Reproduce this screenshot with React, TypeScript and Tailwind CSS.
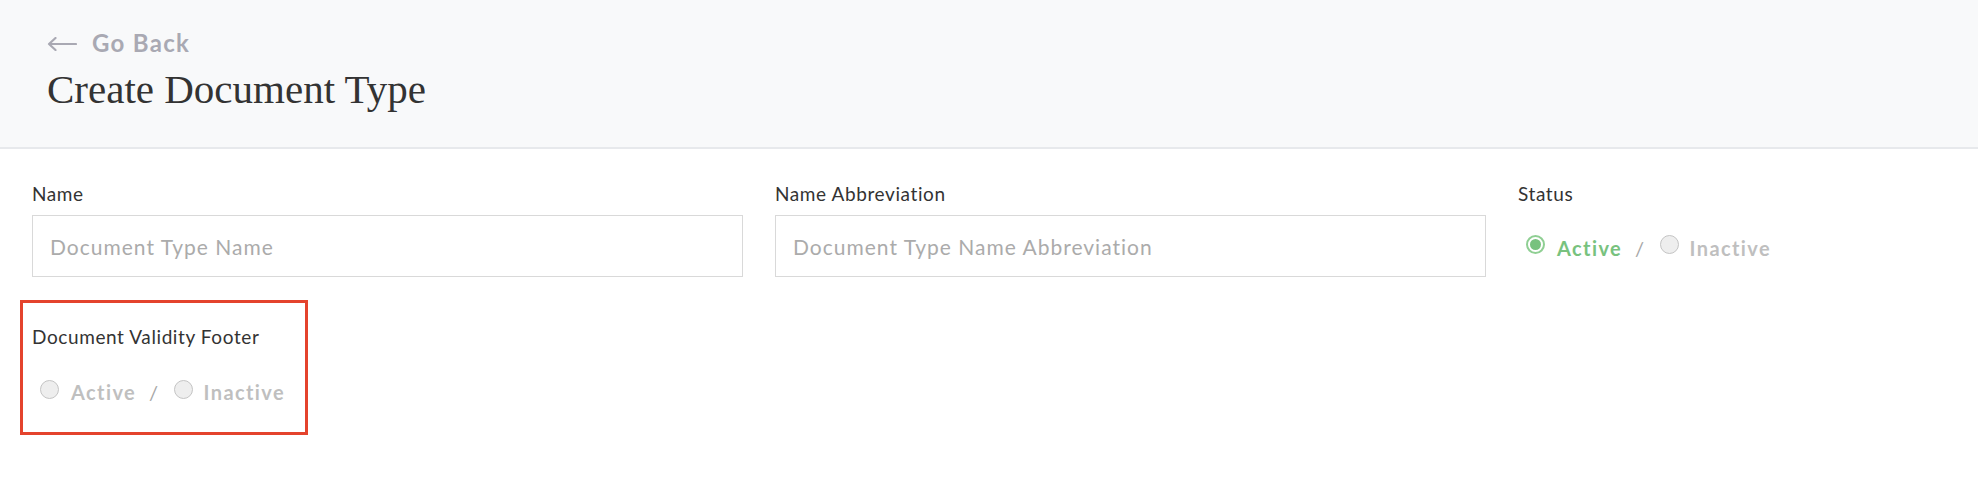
import React from 'react';

const SANS = { fontFamily: 'Lato, "Open Sans", sans-serif' };

function Radio({ checked }: { checked?: boolean }) {
  if (checked) {
    return (
      <span className="flex h-[19px] w-[19px] items-center justify-center rounded-full border-2 border-[#8fcf93] bg-white">
        <span className="h-[11px] w-[11px] rounded-full bg-[#78c27e]" />
      </span>
    );
  }
  return <span className="h-[19px] w-[19px] rounded-full border border-[#c4c4c4] bg-[#eeeeee]" />;
}

function StatusToggle({ value }: { value: 'active' | 'inactive' | null }) {
  return (
    <div className="flex items-center text-[20px] font-bold tracking-[1.4px]">
      <Radio checked={value === 'active'} />
      <span className={`ml-[12px] mt-[6px] ${value === 'active' ? 'text-[#78c27e]' : 'text-[#bfbfbf]'}`}>Active</span>
      <span className="ml-[13px] mr-[14px] mt-[6px] font-normal text-[#a6a6a6]">/</span>
      <Radio checked={value === 'inactive'} />
      <span className={`ml-[11px] mt-[6px] ${value === 'inactive' ? 'text-[#78c27e]' : 'text-[#bfbfbf]'}`}>Inactive</span>
    </div>
  );
}

function TextField({ label, placeholder }: { label: string; placeholder: string }) {
  return (
    <div className="flex flex-col">
      <label className="mb-[10px] text-[19px] leading-[22px] tracking-[0.6px] text-[#333]">{label}</label>
      <input
        placeholder={placeholder}
        className="h-[62px] w-[711px] border border-[#d9d9d9] bg-white px-[17px] text-[21px] tracking-[1px] text-[#333] outline-none placeholder:text-[#ababab]"
      />
    </div>
  );
}

export default function App() {
  return (
    <div className="min-h-screen w-[1978px] overflow-hidden bg-white" style={SANS}>
      {/* header */}
      <div className="h-[149px] border-b-2 border-[#e7e9ec] bg-[#f8f9fa] px-[47px] pt-[29px]">
        <button className="flex items-center gap-[15px] text-[#a9a9b3]">
          <svg width="30" height="14" viewBox="0 0 30 14" fill="none" className="mt-[2px]">
            <path d="M29 7H2M8.5 1L2 7l6.5 6" stroke="#a9a9b3" strokeWidth="2.2" strokeLinecap="round" strokeLinejoin="round" />
          </svg>
          <span className="text-[24px] font-bold leading-[28px] tracking-[1.3px]">Go Back</span>
        </button>
        <h1
          className="mt-[8px] text-[41px] leading-[48px] text-[#333]"
          style={{ fontFamily: '"Liberation Serif", "DejaVu Serif", serif' }}
        >
          Create Document Type
        </h1>
      </div>

      {/* form */}
      <div className="px-[32px] pt-[34px]">
        <div className="flex gap-[32px]">
          <TextField label="Name" placeholder="Document Type Name" />
          <TextField label="Name Abbreviation" placeholder="Document Type Name Abbreviation" />
          <div className="flex flex-col">
            <label className="mb-[10px] text-[19px] leading-[22px] tracking-[0.6px] text-[#333]">Status</label>
            <div className="flex h-[61px] items-center pl-[8px] pb-[2px]">
              <StatusToggle value="active" />
            </div>
          </div>
        </div>

        <div className="-ml-[12px] mt-[23px] w-[288px] border-[3px] border-[#e4432d] pl-[9px] pt-[23px] pb-[25px]">
          <label className="block text-[19px] leading-[22px] tracking-[0.6px] text-[#333]">Document Validity Footer</label>
          <div className="mt-[23px] pl-[8px]">
            <StatusToggle value={null} />
          </div>
        </div>
      </div>
    </div>
  );
}
